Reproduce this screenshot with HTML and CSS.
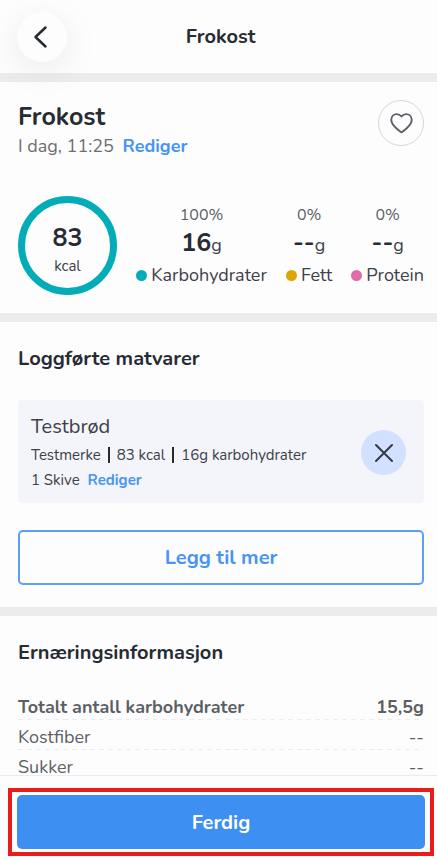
FILE: index.html
```html
<!DOCTYPE html>
<html lang="nb">
<head>
<meta charset="utf-8">
<meta name="viewport" content="width=device-width, initial-scale=1">
<title>Frokost</title>
<link rel="stylesheet" href="styles.css">
</head>
<body>
<div class="app">
  <header class="topbar">
    <button class="back" type="button" aria-label="Tilbake">
      <svg width="50" height="50" viewBox="0 0 50 50" fill="none" stroke="#262b34" stroke-width="2.5" stroke-linecap="round" stroke-linejoin="round"><path d="M28.5 15.500 18.500 25l10 9.500"/></svg>
    </button>
    <h1 class="topbar-title">Frokost</h1>
  </header>

  <main class="content">
    <section class="section summary">
      <div class="meal">
        <div>
          <h2 class="meal-name">Frokost</h2>
          <p class="meal-time">I dag, 11:25 <a class="link" href="#tid">Rediger</a></p>
        </div>
        <button class="favorite" type="button" aria-label="Favoritt">
          <svg width="23" height="21" viewBox="0 0 24 22" fill="none" stroke="#5c5f66" stroke-width="2" stroke-linejoin="round"><path d="M12 3.600C10.300 1.600 8.700 1.200 7 1.200 3.700 1.200 1.300 3.800 1.300 7.200c0 3.400 2 6 5 8.600 1.700 1.500 3.500 2.900 4.700 3.900q1 .8 2 0c1.200-1 3-2.400 4.700-3.900 3-2.600 5-5.200 5-8.600 0-3.400-2.400-6-5.700-6-1.700 0-3.300.4-5 2.400Z"/></svg>
        </button>
      </div>
      <div class="totals">
        <div class="ring"><strong class="ring-value">83</strong><span class="ring-unit">kcal</span></div>
        <ul class="macros">
          <li class="macro"><span class="percent">100%</span><span class="grams"><b class="amount">16</b>g</span><span class="macro-name carbs">Karbohydrater</span></li>
          <li class="macro"><span class="percent">0%</span><span class="grams"><b class="amount">--</b>g</span><span class="macro-name fat">Fett</span></li>
          <li class="macro"><span class="percent">0%</span><span class="grams"><b class="amount">--</b>g</span><span class="macro-name protein">Protein</span></li>
        </ul>
      </div>
    </section>

    <section class="section">
      <h2 class="heading">Loggførte matvarer</h2>
      <article class="food">
        <div>
          <h3 class="food-name">Testbrød</h3>
          <p class="facts"><span>Testmerke</span><span class="fact">83 kcal</span><span class="fact">16g karbohydrater</span></p>
          <p class="portion">1 Skive <a class="link" href="#porsjon">Rediger</a></p>
        </div>
        <button class="remove" type="button" aria-label="Fjern Testbrød">
          <svg width="20" height="20" viewBox="0 0 20 20" fill="none" stroke="#343a46" stroke-width="2" stroke-linecap="round"><path d="m2 2 16 16M18 2 2 18"/></svg>
        </button>
      </article>
      <button class="button outline" type="button">Legg til mer</button>
    </section>

    <section class="section nutrition">
      <h2 class="heading">Ernæringsinformasjon</h2>
      <table class="nutrients">
        <tr class="total"><th scope="row">Totalt antall karbohydrater</th><td>15,5g</td></tr>
        <tr><th scope="row">Kostfiber</th><td>--</td></tr>
        <tr><th scope="row">Sukker</th><td>--</td></tr>
      </table>
    </section>
  </main>

  <footer class="footer">
    <div class="highlight">
      <button class="button primary" type="button">Ferdig</button>
    </div>
  </footer>
</div>
</body>
</html>
```
FILE: styles.css
```css
* { box-sizing: border-box; }

body, h1, h2, h3, p, ul { margin: 0; padding: 0; }

body {
  background: #fdfdfd;
  color: #262b34;
  font-family: Nunito, Lato, sans-serif;
  font-size: 18px;
}

button {
  padding: 0;
  border: 0;
  font: inherit;
  cursor: pointer;
}

svg { display: block; }

.app {
  display: flex;
  flex-direction: column;
  height: 100vh;
}

.topbar {
  display: grid;
  grid-template-columns: 50px 1fr 50px;
  align-items: center;
  flex: none;
  height: 73px;
  padding: 0 13px 0 17px;
}

.back {
  position: relative;
  z-index: 1;
  border-radius: 50%;
  background: #fdfdfd;
  box-shadow: 0 8px 36px rgba(0, 0, 0, 0.08);
}

.topbar-title {
  text-align: center;
  font-size: 20px;
  line-height: 24px;
}

.content {
  flex: 1;
  min-height: 0;
  overflow-y: auto;
  scrollbar-width: none;
}

.section {
  padding: 24px 13px 22px 18px;
  border-top: 9px solid #ebecec;
}

.summary { padding-top: 18px; padding-bottom: 18px; }

.link {
  color: #4794f5;
  font-weight: 700;
  text-decoration: none;
}

.meal {
  display: flex;
  justify-content: space-between;
  align-items: flex-start;
}

.meal-name { font-size: 25px; line-height: 34px; }

.meal-time { color: #6c6e73; line-height: 24px; }

.meal-time .link { margin-left: 4px; }

.favorite {
  display: grid;
  place-items: center;
  width: 46px;
  height: 46px;
  border: 1px solid #d5d5de;
  border-radius: 50%;
  background: none;
}

.totals {
  display: flex;
  justify-content: space-between;
  align-items: center;
  margin-top: 38px;
}

.ring {
  display: flex;
  flex-direction: column;
  align-items: center;
  justify-content: center;
  width: 99px;
  height: 99px;
  padding-top: 8px;
  border: 7px solid #03adb7;
  border-radius: 50%;
}

.ring-value { font-size: 25px; line-height: 32px; }

.ring-unit { color: #3c4048; font-size: 15px; line-height: 24px; }

.macros {
  display: flex;
  gap: 19px;
  padding-top: 1px;
  list-style: none;
}

.macro {
  display: flex;
  flex-direction: column;
  align-items: center;
}

.percent { color: #5c5f66; font-size: 16px; line-height: 24px; }

.grams { color: #3c4048; line-height: 32px; }

.amount { color: #262b34; font-size: 25px; }

.macro-name {
  display: flex;
  align-items: center;
  gap: 4px;
  color: #3c4048;
  line-height: 28px;
}

.macro-name::before {
  content: "";
  width: 11px;
  height: 11px;
  border-radius: 50%;
  background: currentColor;
}

.carbs::before { background: #03adb7; }
.fat::before { background: #dca502; }
.protein::before { background: #e06ba8; }

.heading { font-size: 20px; line-height: 26px; }

.food {
  display: flex;
  justify-content: space-between;
  align-items: center;
  margin-top: 28px;
  padding: 12px 18px 10px 13px;
  border-radius: 4px;
  background: #f4f5fa;
  color: #3c4048;
}

.food-name { font-size: 20px; font-weight: 400; line-height: 30px; }

.facts {
  display: flex;
  align-items: center;
  font-size: 15px;
  line-height: 26px;
}

.fact { display: flex; align-items: center; }

.fact::before {
  content: "";
  width: 2px;
  height: 16px;
  margin: 0 7px;
  background: #262b34;
}

.portion { font-size: 15px; line-height: 25px; }

.portion .link { margin-left: 4px; }

.remove {
  display: grid;
  place-items: center;
  flex: none;
  width: 45px;
  height: 45px;
  border-radius: 50%;
  background: #d2e1ff;
}

.button {
  width: 100%;
  border-radius: 5px;
  font-size: 20px;
  font-weight: 700;
}

.outline {
  height: 55px;
  margin-top: 27px;
  border: 2px solid #5b9ff6;
  background: none;
  color: #4794f5;
}

.primary {
  display: block;
  height: 54px;
  background: #3d8ff2;
  color: #fff;
}

.nutrients {
  width: 100%;
  margin-top: 24px;
  border-spacing: 0;
  color: #5c5f66;
}

.nutrients tr {
  background: repeating-linear-gradient(90deg, #ececf3 0 5px, transparent 5px 9px) bottom / 100% 1px no-repeat;
}

.nutrients th, .nutrients td {
  height: 30px;
  padding: 5px 0 1px;
  font-weight: 400;
  line-height: 24px;
  text-align: left;
}

.nutrients td { text-align: right; }

.nutrients .total th, .nutrients .total td { font-weight: 700; }

.footer {
  flex: none;
  padding: 12px 3px 4px 8px;
  border-top: 1px solid #ececf3;
}

.highlight {
  padding: 3px 5px;
  border: 4px solid #e91c1c;
}
```
